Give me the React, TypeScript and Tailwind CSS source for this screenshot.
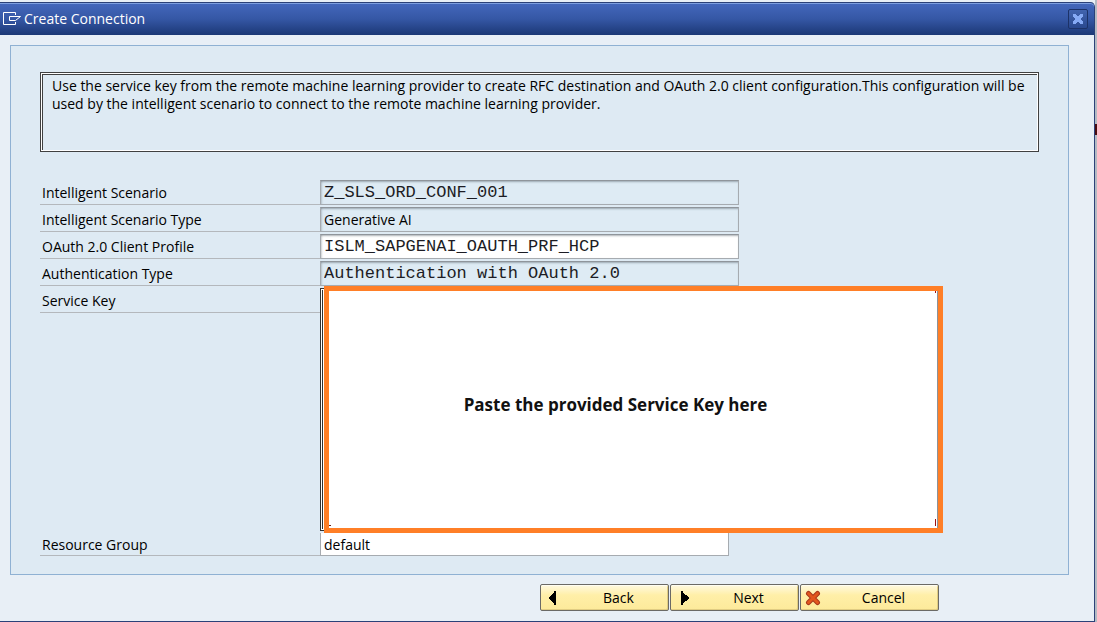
import React from "react";

const labelClass =
  "flex w-[280px] shrink-0 items-center border-b border-[#b4b8bc] pt-px pl-[2px]";
const fieldBase =
  "h-[25px] w-[419px] border border-[#a6abb0] border-t-[#8f959b] px-[3px] outline-none shadow-[inset_0_2px_2px_-1px_rgba(80,90,100,0.45),inset_2px_0_2px_-1px_rgba(80,90,100,0.25)]";
const monoClass = "font-['Liberation_Mono',monospace] text-[17px] text-[#1c1c24]";

type FieldProps = {
  id: string;
  label: string;
  value: string;
  mono?: boolean;
  editable?: boolean;
};

function Field({ id, label, value, mono, editable }: FieldProps) {
  return (
    <div className="flex">
      <label htmlFor={id} className={`${labelClass} h-[25px]`}>
        {label}
      </label>
      <input
        id={id}
        type="text"
        defaultValue={value}
        readOnly={!editable}
        className={`${fieldBase} ${editable ? "bg-white" : "bg-[#deebf4]"} ${mono ? monoClass : ""}`}
      />
    </div>
  );
}

type ActionButtonProps = {
  icon: React.ReactNode;
  label: string;
  wide?: boolean;
};

function ActionButton({ icon, label, wide }: ActionButtonProps) {
  return (
    <button
      type="button"
      className={`flex h-[27px] items-center rounded-[2px] border border-[#6b6a66] bg-linear-to-b from-[#fff9e0] via-[#ffefa8] via-40% to-[#fdea9a] pl-1 shadow-[inset_0_1px_0_#fffdf2,inset_-1px_-1px_0_#e0cc82] ${wide ? "w-[139px]" : "w-[129px]"}`}
    >
      {icon}
      <span className="flex-1 pl-2 text-center">{label}</span>
    </button>
  );
}

export default function App() {
  return (
    <div className="flex min-h-screen bg-[#e8eff6] font-['Open_Sans','Noto_Sans',sans-serif] text-[14px] leading-[18px] text-black">
      <div className="flex flex-1 flex-col pt-[2px]">
        <div className="flex flex-1 flex-col rounded-tr-[5px] border-r border-b border-[#2b4178]">
          <header className="flex h-[33px] items-center justify-between rounded-tr-[4px] border-t border-[#2b4178] bg-linear-to-b from-[#4468bd] via-[#3557a5] to-[#1c3876] pr-[6px] pb-px pl-[3px] text-white shadow-[inset_0_1px_0_#7d9fe0]">
            <h1 className="flex items-center gap-[3px]">
              <svg width="18" height="14" viewBox="0 0 18 14" fill="none" stroke="white" aria-hidden="true">
                <path d="M12.500 3V.5H.5v12h12V10" />
                <path d="M17.500 4.500H6.500v4h6l5-4" />
              </svg>
              Create Connection
            </h1>
            <button
              type="button"
              aria-label="Close"
              className="flex size-[20px] items-center justify-center rounded-[2px] border border-[#1c3268] bg-linear-to-b from-[#4163ae] to-[#2a488f]"
            >
              <svg width="12" height="12" viewBox="0 0 12 12" fill="#86aaf5" aria-hidden="true">
                <path d="M1 1h3v1h1v1h2V2h1V1h3v3h-1v1H9v2h1v1h1v3H8v-1H7V9H5v1H4v1H1V8h1V7h1V5H2V4H1z" />
              </svg>
            </button>
          </header>

          <main className="mt-[10px] mr-[25px] ml-[10px] border border-[#8fb1d3] bg-[#deeaf3] px-[29px] pt-[26px] pb-[18px]">
            <div className="h-[80px] border border-[#404040] bg-white p-px">
              <div className="h-full border-t border-l border-[#404040] bg-[#deeaf3] px-[9px] pt-[2px]">
                <p>
                  Use the service key from the remote machine learning provider to create RFC destination and OAuth 2.0
                  client configuration.This configuration will be used by the intelligent scenario to connect to the
                  remote machine learning provider.
                </p>
              </div>
            </div>

            <form className="mt-[28px] flex flex-col">
              <div className="flex flex-col gap-[2px]">
                <Field id="scenario" label="Intelligent Scenario" value="Z_SLS_ORD_CONF_001" mono />
                <Field id="scenario-type" label="Intelligent Scenario Type" value="Generative AI" />
                <Field id="profile" label="OAuth 2.0 Client Profile" value="ISLM_SAPGENAI_OAUTH_PRF_HCP" mono editable />
                <Field id="auth-type" label="Authentication Type" value="Authentication with OAuth 2.0" mono />
              </div>
              <div className="flex">
                <label htmlFor="service-key" className={`${labelClass} mt-[2px] h-[25px]`}>
                  Service Key
                </label>
                <div className="my-[2px] w-[4px] border border-r-0 border-[#303030] bg-white py-px pl-px">
                  <div className="h-full border-l border-[#303030]" />
                </div>
                <div className="relative">
                  <textarea
                    id="service-key"
                    placeholder="Paste the provided Service Key here"
                    className="block h-[247px] w-[619px] resize-none border-5 border-[#ff7f27] bg-white pt-[104px] pr-[36px] text-center text-[17px] leading-[20px] font-bold shadow-[inset_-1px_0_0_#8c9299] outline-none placeholder:text-[#111111]"
                  />
                  <span className="absolute top-[5px] right-[7px] h-[2px] w-px bg-[#a01010]" />
                  <span className="absolute right-[7px] bottom-[7px] h-[7px] w-px bg-[#a01010]" />
                  <span className="absolute bottom-[7px] left-[5px] h-px w-[2px] bg-[#602020]" />
                </div>
              </div>
              <div className="flex">
                <label htmlFor="group" className={`${labelClass} h-[23px]`}>
                  Resource Group
                </label>
                <input
                  id="group"
                  type="text"
                  defaultValue="default"
                  className="h-[23px] w-[409px] border border-t-0 border-[#a6abb0] bg-white px-[3px] outline-none"
                />
              </div>
            </form>
          </main>

          <footer className="mt-[9px] mr-[155px] mb-[9px] flex justify-end gap-px">
            <ActionButton
              label="Back"
              icon={
                <svg width="16" height="16" viewBox="0 0 16 16" aria-hidden="true">
                  <path d="M11 1v14H9v-2H8v-1H7v-1H6v-1H5V9H4V7h1V6h1V5h1V4h1V3h1V1z" />
                </svg>
              }
            />
            <ActionButton
              label="Next"
              icon={
                <svg width="16" height="16" viewBox="0 0 16 16" aria-hidden="true">
                  <path d="M6 1v14h2v-2h1v-1h1v-1h2v-1h1V9h1V7h-1V6h-1V5h-2V4H9V3H8V1z" />
                </svg>
              }
            />
            <ActionButton
              wide
              label="Cancel"
              icon={
                <svg width="16" height="16" viewBox="0 0 16 16" aria-hidden="true">
                  <path
                    d="M3.500 3.500l9 9M12.500 3.500l-9 9"
                    stroke="#a8381c"
                    strokeWidth="5"
                    strokeLinecap="round"
                  />
                  <path d="M3.500 3.500l9 9M12.500 3.500l-9 9" stroke="#e2571e" strokeWidth="3" strokeLinecap="round" />
                </svg>
              }
            />
          </footer>
        </div>
      </div>
      <div className="w-[2px] bg-[#b3bac3] pt-[124px]">
        <div className="h-[11px] bg-[#4a0c10]" />
      </div>
    </div>
  );
}
